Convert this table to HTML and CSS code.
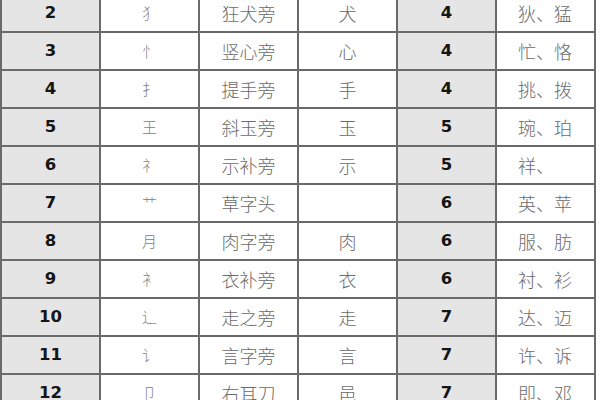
FILE: index.html
```html
<!DOCTYPE html>
<html lang="zh">
<head>
<meta charset="utf-8">
<title>偏旁部首表</title>
<link rel="stylesheet" href="styles.css">
</head>
<body>
<table class="radicals">
  <colgroup>
    <col class="c"><col class="c"><col class="c"><col class="c"><col class="c"><col class="c">
  </colgroup>
  <tbody>
    <tr><td class="num">2</td><td class="rad">犭</td><td class="name">狂犬旁</td><td class="char">犬</td><td class="num">4</td><td class="ex">狄、猛</td></tr>
    <tr><td class="num">3</td><td class="rad">忄</td><td class="name">竖心旁</td><td class="char">心</td><td class="num">4</td><td class="ex">忙、恪</td></tr>
    <tr><td class="num">4</td><td class="rad">扌</td><td class="name">提手旁</td><td class="char">手</td><td class="num">4</td><td class="ex">挑、拨</td></tr>
    <tr><td class="num">5</td><td class="rad">王</td><td class="name">斜玉旁</td><td class="char">玉</td><td class="num">5</td><td class="ex">琬、珀</td></tr>
    <tr><td class="num">6</td><td class="rad">礻</td><td class="name">示补旁</td><td class="char">示</td><td class="num">5</td><td class="ex">祥、</td></tr>
    <tr><td class="num">7</td><td class="rad">艹</td><td class="name">草字头</td><td class="char"></td><td class="num">6</td><td class="ex">英、苹</td></tr>
    <tr><td class="num">8</td><td class="rad">月</td><td class="name">肉字旁</td><td class="char">肉</td><td class="num">6</td><td class="ex">服、肪</td></tr>
    <tr><td class="num">9</td><td class="rad">衤</td><td class="name">衣补旁</td><td class="char">衣</td><td class="num">6</td><td class="ex">衬、衫</td></tr>
    <tr><td class="num">10</td><td class="rad">辶</td><td class="name">走之旁</td><td class="char">走</td><td class="num">7</td><td class="ex">达、迈</td></tr>
    <tr><td class="num">11</td><td class="rad">讠</td><td class="name">言字旁</td><td class="char">言</td><td class="num">7</td><td class="ex">许、诉</td></tr>
    <tr><td class="num">12</td><td class="rad">卩</td><td class="name">右耳刀</td><td class="char">邑</td><td class="num">7</td><td class="ex">即、邓</td></tr>
  </tbody>
</table>
</body>
</html>
```
FILE: styles.css
```css
html, body {
  margin: 0;
  padding: 0;
  background: #ffffff;
  overflow: hidden;
}
.radicals {
  border-collapse: collapse;
  table-layout: fixed;
  width: 596px;
  margin-top: -7px;
  font-family: "Noto Sans CJK SC", "Liberation Sans", sans-serif;
}
.radicals .c {
  width: 99px;
}
.radicals td {
  border: 2px solid #6a6a6a;
  height: 36px;
  padding: 0;
  text-align: center;
  vertical-align: middle;
  color: #6a6a6a;
  font-size: 18px;
  font-weight: 300;
  line-height: 20px;
}
.radicals td.num {
  background: #e5e5e5;
  color: #151515;
  font-family: "DejaVu Sans", "Liberation Sans", sans-serif;
  font-weight: bold;
  font-size: 16.5px;
}
.radicals td.rad {
  color: #808080;
  font-size: 15px;
}
.radicals td.ex {
  text-align: left;
  padding-left: 21px;
}
```
